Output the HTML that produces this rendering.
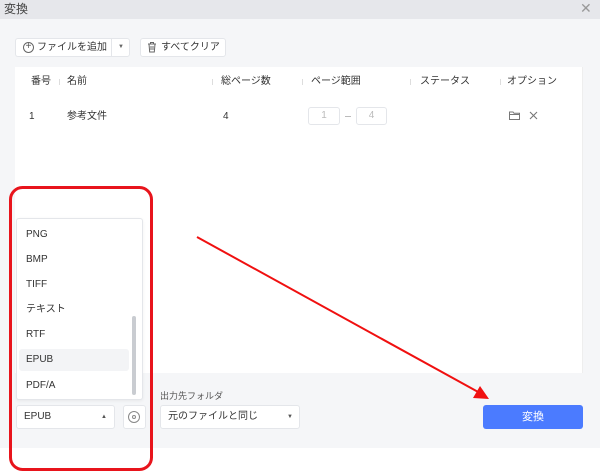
<!DOCTYPE html>
<html><head><meta charset="utf-8"><style>
*{margin:0;padding:0;box-sizing:border-box}
body{width:600px;height:474px;background:#fff;font-family:"Liberation Sans","Noto Sans CJK JP",sans-serif;position:relative;overflow:hidden;color:#333}
.a{position:absolute}
.t{font-size:10px;line-height:12px;color:#333;white-space:nowrap}
.btn{position:absolute;background:#fff;border:1px solid #e4e6ea;border-radius:3px}
</style></head><body>
<div class="a" style="left:0;top:0;width:600px;height:19px;background:#e6e7eb"></div>
<div class="a t" style="left:4px;top:2px;font-size:12px;line-height:14px;color:#444">変換</div>
<div class="a" style="left:580px;top:0px;font-size:14px;line-height:16px;color:#999">✕</div>
<div class="a" style="left:0;top:19px;width:600px;height:429px;background:#f5f6f8"></div>
<div class="btn" style="left:15px;top:38px;width:96px;height:19px;border-right:none;border-radius:3px 0 0 3px"></div>
<div class="btn" style="left:111px;top:38px;width:19px;height:19px;border-radius:0 3px 3px 0"></div>
<div class="a" style="left:118px;top:44px;font-size:6px;line-height:6px;color:#666">▼</div>
<div class="a" style="left:23px;top:42px;width:11px;height:11px;border:1px solid #666;border-radius:50%;font-size:10px;line-height:8px;text-align:center;color:#555">+</div>
<div class="a t" style="left:37px;top:42px">ファイルを追加</div>
<div class="btn" style="left:140px;top:38px;width:86px;height:19px"></div>
<svg class="a" style="left:147px;top:41px" width="10" height="12"><path d="M1 3h8M3.5 3V1.5h3V3M2 3l.7 8h4.6L8 3M4 5v4M6 5v4" fill="none" stroke="#666" stroke-width="1"/></svg>
<div class="a t" style="left:161px;top:42px">すべてクリア</div>
<div class="a" style="left:15px;top:67px;width:568px;height:306px;background:#fff;border-right:1px solid #eee"></div>
<div class="a t" style="left:31px;top:76px">番号</div>
<div class="a t" style="left:67px;top:76px">名前</div>
<div class="a t" style="left:221px;top:76px">総ページ数</div>
<div class="a t" style="left:311px;top:76px">ページ範囲</div>
<div class="a t" style="left:420px;top:76px">ステータス</div>
<div class="a t" style="left:507px;top:76px">オプション</div>
<div class="a" style="left:59px;top:79px;width:1px;height:6px;background:#ddd"></div>
<div class="a" style="left:212px;top:79px;width:1px;height:6px;background:#ddd"></div>
<div class="a" style="left:302px;top:79px;width:1px;height:6px;background:#ddd"></div>
<div class="a" style="left:410px;top:79px;width:1px;height:6px;background:#ddd"></div>
<div class="a" style="left:500px;top:79px;width:1px;height:6px;background:#ddd"></div>
<div class="a t" style="left:29px;top:111px">1</div>
<div class="a t" style="left:67px;top:111px">参考文件</div>
<div class="a t" style="left:223px;top:111px">4</div>
<div class="btn" style="left:308px;top:107px;width:32px;height:18px;color:#bbb;font-size:10px;text-align:center;line-height:16px">1</div>
<div class="a" style="left:345px;top:116px;width:6px;height:1px;background:#bbb"></div>
<div class="btn" style="left:356px;top:107px;width:31px;height:18px;color:#bbb;font-size:10px;text-align:center;line-height:16px">4</div>
<svg class="a" style="left:509px;top:111px" width="11" height="9"><path d="M.5 1h3.5l1 1.3h5.5V8.5H.5zM.5 3.5h10" fill="none" stroke="#777"/></svg>
<svg class="a" style="left:529px;top:111px" width="9" height="9"><path d="M1 1l7 7M8 1L1 8" stroke="#777" stroke-width="1.1"/></svg>
<div class="a" style="left:16px;top:218px;width:127px;height:182px;background:#fff;border:1px solid #e4e6ea;border-radius:3px;box-shadow:0 1px 3px rgba(0,0,0,.06)"></div>
<div class="a" style="left:19px;top:349px;width:110px;height:22px;background:#f3f4f6;border-radius:3px"></div>
<div class="a" style="left:132px;top:316px;width:4px;height:79px;background:#c9ccd1;border-radius:2px"></div>
<div class="a t" style="left:26px;top:229px">PNG</div>
<div class="a t" style="left:26px;top:254px">BMP</div>
<div class="a t" style="left:26px;top:279px">TIFF</div>
<div class="a t" style="left:26px;top:304px">テキスト</div>
<div class="a t" style="left:26px;top:329px">RTF</div>
<div class="a t" style="left:26px;top:354px">EPUB</div>
<div class="a t" style="left:26px;top:380px">PDF/A</div>
<div class="btn" style="left:16px;top:405px;width:99px;height:24px"></div>
<div class="a t" style="left:24px;top:411px">EPUB</div>
<div class="a" style="left:101px;top:414px;font-size:6px;line-height:6px;color:#555">▲</div>
<div class="btn" style="left:123px;top:405px;width:23px;height:24px"></div>
<div class="a" style="left:128px;top:411px;width:12px;height:12px;border:1px solid #888;border-radius:50%"></div>
<div class="a" style="left:132px;top:415px;width:4px;height:4px;border:1px solid #888;border-radius:50%"></div>
<div class="a t" style="left:160px;top:390px;font-size:9px;color:#555">出力先フォルダ</div>
<div class="btn" style="left:160px;top:405px;width:140px;height:24px"></div>
<div class="a t" style="left:168px;top:411px">元のファイルと同じ</div>
<div class="a" style="left:287px;top:414px;font-size:6px;line-height:6px;color:#555">▼</div>
<div class="a" style="left:483px;top:405px;width:100px;height:24px;background:#4b7bff;border-radius:3px;color:#fff;font-size:11px;text-align:center;line-height:24px">変換</div>
<svg class="a" style="left:0;top:0" width="600" height="474">
<rect x="10.5" y="187.5" width="141" height="282" rx="12" fill="none" stroke="#e8141c" stroke-width="3"/>
<line x1="197" y1="237" x2="480" y2="393" stroke="#f01010" stroke-width="2"/>
<path d="M489 399L473 398L480 386z" fill="#f01010"/>
</svg>
</body></html>
